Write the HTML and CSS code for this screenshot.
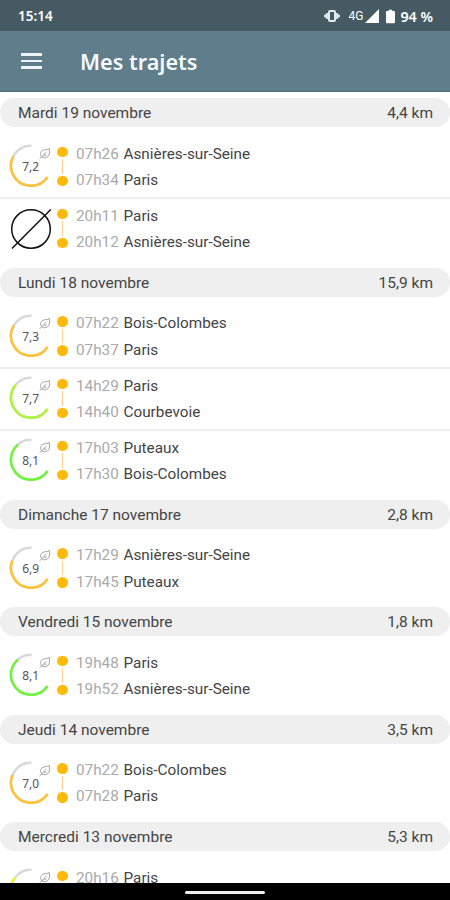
FILE: index.html
```html
<!DOCTYPE html>
<html lang="fr">
<head>
    <meta charset="UTF-8">
    <meta name="viewport" content="width=device-width, initial-scale=1.0">
    <title>Mes trajets</title>
    <link rel="stylesheet" href="styles.css">
</head>
<body>
    <svg class="defs">
        <symbol id="leaf" viewBox="0 0 12 12">
            <path d="M10.7 1C10.5 3.5 11.6 6.2 9.6 8.6C7.8 10.6 4.6 10.8 3 9.2C1.2 7.4 1.6 4.6 3.6 3.2C5.6 1.8 8.4 2.4 10.7 1Z"/>
            <path d="M0.8 11.4L7.8 4.6M5 7.6H7.8"/>
        </symbol>
    </svg>

    <div class="status-bar">
        <span class="clock">15:14</span>
        <svg class="vibrate" viewBox="0 0 16 14">
            <rect x="5" y="2" width="6" height="10" rx="1"/>
            <path d="M2.9 4V10M1 5.8V8.2M13.1 4V10M15 5.8V8.2"/>
        </svg>
        <span class="network">4G</span>
        <svg class="signal" viewBox="0 0 14 14"><path d="M14 0V14H0Z"/></svg>
        <svg class="battery" viewBox="0 0 10 15"><path d="M3 0H7V1.5H9Q10 1.5 10 2.5V14Q10 15 9 15H1Q0 15 0 14V2.5Q0 1.5 1 1.5H3Z"/></svg>
        <span class="percent">94 %</span>
    </div>

    <header class="app-bar">
        <div class="menu">
            <span></span>
            <span></span>
            <span></span>
        </div>
        <h1>Mes trajets</h1>
    </header>

    <main id="trips"></main>

    <div class="nav-bar"><span class="handle"></span></div>

    <script>
        const days = [
            { date: 'Mardi 19 novembre', distance: '4,4 km', trips: [
                { score: 7.2, color: 'orange', stops: [['07h26', 'Asnières-sur-Seine'], ['07h34', 'Paris']] },
                { score: null, stops: [['20h11', 'Paris'], ['20h12', 'Asnières-sur-Seine']] }
            ] },
            { date: 'Lundi 18 novembre', distance: '15,9 km', trips: [
                { score: 7.3, color: 'orange', stops: [['07h22', 'Bois-Colombes'], ['07h37', 'Paris']] },
                { score: 7.7, color: 'lime', stops: [['14h29', 'Paris'], ['14h40', 'Courbevoie']] },
                { score: 8.1, color: 'green', stops: [['17h03', 'Puteaux'], ['17h30', 'Bois-Colombes']] }
            ] },
            { date: 'Dimanche 17 novembre', distance: '2,8 km', trips: [
                { score: 6.9, color: 'orange', stops: [['17h29', 'Asnières-sur-Seine'], ['17h45', 'Puteaux']] }
            ] },
            { date: 'Vendredi 15 novembre', distance: '1,8 km', trips: [
                { score: 8.1, color: 'green', stops: [['19h48', 'Paris'], ['19h52', 'Asnières-sur-Seine']] }
            ] },
            { date: 'Jeudi 14 novembre', distance: '3,5 km', trips: [
                { score: 7.0, color: 'orange', stops: [['07h22', 'Bois-Colombes'], ['07h28', 'Paris']] }
            ] },
            { date: 'Mercredi 13 novembre', distance: '5,3 km', trips: [
                { score: 7.5, color: 'yellow', stops: [['20h16', 'Paris']] }
            ] }
        ];

        // open ring, from the lower right round to the top
        const arc = 'M39.5 33A20 20 0 1 1 23.5 1.8';

        function gauge(trip) {
            if (trip.score === null) {
                return `<svg class="gauge none" viewBox="0 0 44 44">
                    <circle cx="23" cy="22" r="19.3"/><path d="M4 41.5L42.8 2.5"/>
                </svg>`;
            }
            return `<svg class="gauge" viewBox="0 0 44 44">
                <path class="track" d="${arc}"/>
                <path class="value ${trip.color}" pathLength="10" stroke-dasharray="${trip.score + 0.15} 10" d="${arc}"/>
                <text x="22.7" y="26.5">${trip.score.toFixed(1).replace('.', ',')}</text>
                <use href="#leaf" x="30.7" y="3.5" width="12" height="12"/>
            </svg>`;
        }

        function stop([time, place]) {
            return `<div class="stop"><span class="time">${time}</span><span class="place">${place}</span></div>`;
        }

        document.getElementById('trips').innerHTML = days.map(day => `
            <section class="day">
                <div class="day-header"><span>${day.date}</span><span>${day.distance}</span></div>
                ${day.trips.map(trip => `
                    <div class="trip">
                        ${gauge(trip)}
                        <div class="route"><i></i><b></b><i></i></div>
                        <div class="stops">${trip.stops.map(stop).join('')}</div>
                    </div>`).join('')}
            </section>`).join('');
    </script>
</body>
</html>
```
FILE: styles.css
```css
* {
    box-sizing: border-box;
}
body {
    margin: 0;
    height: 900px;
    display: flex;
    flex-direction: column;
    overflow: hidden;
    background: #fff;
    color: #444;
    font-family: Roboto, sans-serif;
}
.defs {
    display: none;
}
.status-bar {
    flex: none;
    height: 31px;
    display: flex;
    align-items: center;
    padding: 1px 17px 0 18px;
    background: #455a63;
    color: #fff;
    font-family: "Noto Sans", sans-serif;
    font-size: 13.5px;
    font-weight: 600;
}
.clock {
    flex: 1;
}
.vibrate {
    width: 16px;
    height: 14px;
    margin-right: 8px;
    fill: none;
    stroke: #e4eaec;
    stroke-width: 2;
}
.network {
    width: 15px;
    margin-right: 2px;
    font-family: Roboto, sans-serif;
    font-size: 12px;
    font-weight: 400;
}
.signal {
    width: 14px;
    height: 14px;
    margin-right: 7px;
    fill: #fff;
}
.battery {
    width: 9px;
    height: 15px;
    margin-right: 5px;
    fill: #fff;
}
.percent {
    font-size: 14.3px;
}
.app-bar {
    flex: none;
    height: 61px;
    display: flex;
    align-items: center;
    padding-left: 21px;
    background: #607d8b;
    border-bottom: 1px solid #4b6c7c;
}
.menu {
    width: 21px;
    display: grid;
    gap: 4px;
    margin-right: 38px;
}
.menu span {
    height: 2.4px;
    background: #eef4f8;
}
h1 {
    margin: 0;
    padding-top: 1px;
    color: #f5fafc;
    font-family: "Noto Sans", sans-serif;
    font-size: 21.6px;
    font-weight: 600;
}
#trips {
    flex: 1;
    min-height: 0;
    overflow: hidden;
    padding-top: 6px;
}
.day {
    padding-bottom: 8px;
}
.day-header {
    height: 29.3px;
    display: flex;
    align-items: center;
    justify-content: space-between;
    margin-bottom: 8px;
    padding: 1px 17px 0 18px;
    border-radius: 15px;
    background: #efefef;
    font-size: 15.5px;
}
.trip {
    height: 62.2px;
    display: flex;
    align-items: center;
    padding-left: 8px;
}
.trip + .trip {
    padding-bottom: 2px;
    border-top: 2px solid #f0f0f0;
}
.gauge {
    width: 44px;
    height: 44px;
    fill: none;
    stroke-width: 2.5;
}
.gauge text {
    fill: #555;
    font-family: "Noto Sans", sans-serif;
    font-size: 12px;
    text-anchor: middle;
}
.gauge use {
    stroke: #999;
    stroke-width: 0.9;
}
.gauge.none {
    stroke: #111;
    stroke-width: 1.5;
}
.track {
    stroke: #d9d9d9;
}
.orange {
    stroke: #fdc236;
}
.yellow {
    stroke: #f2f21c;
}
.lime {
    stroke: #adf53c;
}
.green {
    stroke: #6df53c;
}
.route {
    width: 11px;
    margin: 0 8px 0 5px;
    display: flex;
    flex-direction: column;
    align-items: center;
    gap: 2px;
}
.route i {
    width: 10.5px;
    height: 10.5px;
    border-radius: 50%;
    background: #ffb908;
}
.route b {
    width: 1px;
    height: 14.5px;
    background: #ffcf94;
}
.stops {
    height: 52.4px;
    margin-top: 1px;
}
.stop {
    display: flex;
    height: 26.2px;
    align-items: center;
    font-size: 15.3px;
}
.time {
    width: 47.5px;
    color: #aaa;
}
.nav-bar {
    flex: none;
    height: 17px;
    display: flex;
    align-items: center;
    justify-content: center;
    padding-top: 2px;
    background: #000;
}
.handle {
    width: 80px;
    height: 3.5px;
    border-radius: 2px;
    background: #eee;
}
```
